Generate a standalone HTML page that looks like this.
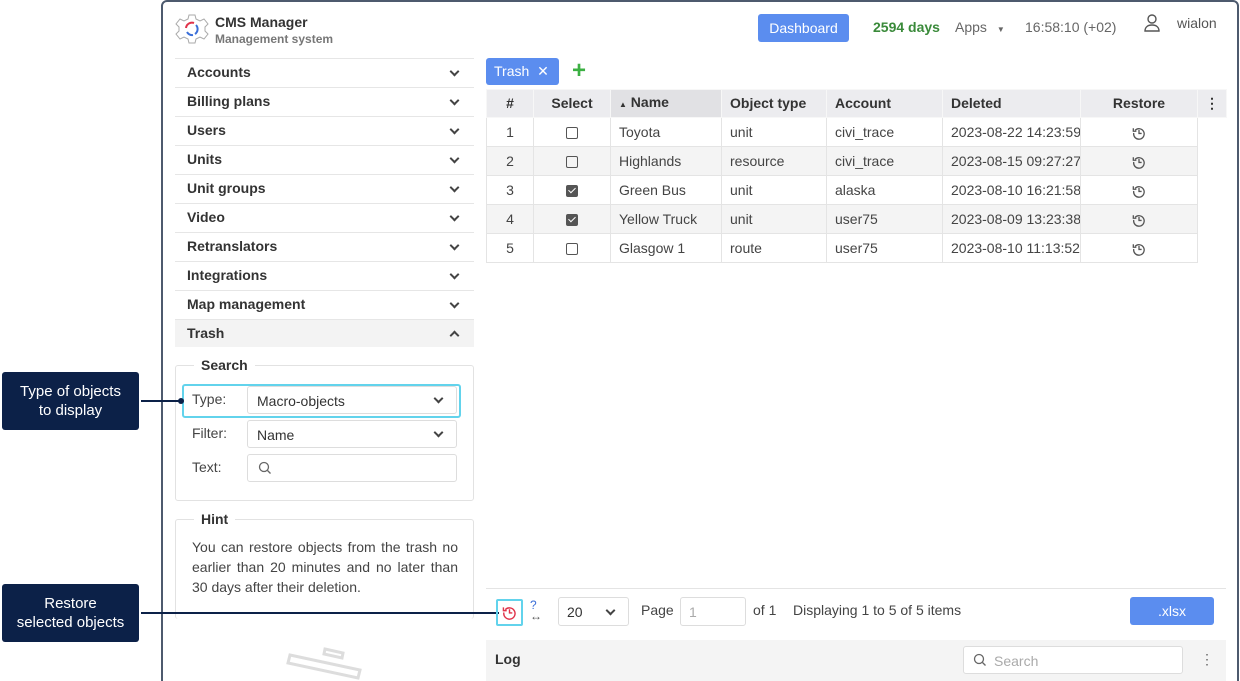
<!DOCTYPE html>
<html><head><meta charset="utf-8"><style>
*{box-sizing:border-box;margin:0;padding:0}
html,body{width:1240px;height:681px;overflow:hidden}
body{background:#fff;font-family:"Liberation Sans",sans-serif;font-size:14px;color:#333;position:relative}
.abs{position:absolute}
.frame{left:161px;top:0;width:1078px;height:700px;border:2px solid #4d5a6e;border-radius:6px;background:#fff}
.nav{left:175px;width:299px;height:29px;border-top:1px solid #e6e6e6;font-weight:bold;font-size:14px;color:#333;padding:5px 0 0 12px}
.chev{position:absolute;right:16px;top:9px;width:7px;height:7px;border-right:2px solid #444;border-bottom:2px solid #444;transform:rotate(45deg)}
.chev.up{transform:rotate(-135deg);top:12px}
table{border-collapse:collapse;font-size:14px;table-layout:fixed}
td,th{height:29px;line-height:27px;border:1px solid #e4e4e4;padding:0 0 0 8px;text-align:left;font-weight:normal;color:#444;white-space:nowrap;overflow:hidden}
th{background:#ececef;font-weight:bold;color:#333;border-color:#f7f7f7;height:27px;line-height:25px}
tr.g td{background:#f4f4f4}
.c{text-align:center;padding:0}
.cb{display:inline-block;width:12px;height:12px;border:1.5px solid #555;border-radius:2px;vertical-align:middle}
.cb.on{background:#555;position:relative}
.cb.on:after{content:"";position:absolute;left:3px;top:0px;width:3px;height:6px;border-right:1.5px solid #fff;border-bottom:1.5px solid #fff;transform:rotate(45deg)}
.callout{background:#0c2148;color:#fff;text-align:center;font-size:15px;line-height:19px;border-radius:3px;left:2px;width:137px}
.fs{left:175px;width:299px;border:1px solid #e2e2e2;border-radius:3px}
.legend{position:absolute;top:-9px;left:18px;background:#fff;padding:0 7px;font-weight:bold;font-size:14px}
.inp{position:absolute;left:247px;width:210px;height:28px;border:1px solid #ddd;border-radius:3px;padding:6px 9px;font-size:14px}
.lbl{position:absolute;left:192px;font-size:14px;color:#444}
.ri{vertical-align:middle}
</style></head><body>
<div class="abs frame"></div>
<svg class="abs" style="left:175px;top:13px" width="34" height="34" viewBox="0 0 34 34"><path d="M14 2h6l1 4 4 2 4-2 4 5-3 3v4l3 3-4 5-4-2-4 2-1 4h-6l-1-4-4-2-4 2-4-5 3-3v-4L1 11l4-5 4 2 4-2z" fill="none" stroke="#aaa" stroke-width="1"/><path d="M11 15a6 6 0 0 1 8-5" stroke="#e0334a" stroke-width="2" fill="none"/><path d="M21 12a6 6 0 0 1-1 9M12 19a6 6 0 0 0 6 3" stroke="#3b6fd8" stroke-width="2" fill="none"/></svg>
<div class="abs" style="left:215px;top:14px;font-weight:bold;font-size:14px;color:#333">CMS Manager</div>
<div class="abs" style="left:215px;top:32px;font-weight:bold;font-size:12px;color:#777">Management system</div>
<div class="abs" style="left:758px;top:14px;width:91px;height:28px;background:#5b8def;border-radius:3px;color:#fff;text-align:center;line-height:28px">Dashboard</div>
<div class="abs" style="left:873px;top:19px;color:#3a8a3a;font-weight:bold">2594 days</div>
<div class="abs" style="left:955px;top:19px;color:#666">Apps <span style="font-size:8px;margin-left:6px">▼</span></div>
<div class="abs" style="left:1025px;top:19px;color:#666">16:58:10 (+02)</div>
<svg class="abs" style="left:1143px;top:13px" width="18" height="20" viewBox="0 0 18 20"><circle cx="9" cy="6" r="4" fill="none" stroke="#555" stroke-width="1.4"/><path d="M2 18c0-4 3-6 7-6s7 2 7 6z" fill="none" stroke="#555" stroke-width="1.4"/></svg>
<div class="abs" style="left:1177px;top:15px;color:#555">wialon</div>
<div class="abs nav" style="top:58px">Accounts<i class="chev"></i></div>
<div class="abs nav" style="top:87px">Billing plans<i class="chev"></i></div>
<div class="abs nav" style="top:116px">Users<i class="chev"></i></div>
<div class="abs nav" style="top:145px">Units<i class="chev"></i></div>
<div class="abs nav" style="top:174px">Unit groups<i class="chev"></i></div>
<div class="abs nav" style="top:203px">Video<i class="chev"></i></div>
<div class="abs nav" style="top:232px">Retranslators<i class="chev"></i></div>
<div class="abs nav" style="top:261px">Integrations<i class="chev"></i></div>
<div class="abs nav" style="top:290px">Map management<i class="chev"></i></div>
<div class="abs nav" style="top:319px;background:#f3f3f3;height:28px">Trash<i class="chev up"></i></div>
<div class="abs fs" style="top:365px;height:136px"><span class="legend">Search</span></div>
<div class="abs" style="left:182px;top:384px;width:279px;height:34px;border:2px solid #62d3ec;border-radius:3px"></div>
<div class="lbl" style="top:391px">Type:</div>
<div class="inp" style="top:386px">Macro-objects<i class="chev" style="right:14px;top:8px"></i></div>
<div class="lbl" style="top:425px">Filter:</div>
<div class="inp" style="top:420px">Name<i class="chev" style="right:14px;top:8px"></i></div>
<div class="lbl" style="top:459px">Text:</div>
<div class="inp" style="top:454px"><svg width="14" height="14" viewBox="0 0 14 14" style="position:absolute;left:10px;top:6px"><circle cx="6" cy="6" r="4.5" fill="none" stroke="#666" stroke-width="1.3"/><path d="M9.5 9.5l3 3" stroke="#666" stroke-width="1.3"/></svg></div>
<div class="abs fs" style="top:519px;height:100px;border-bottom:none"><span class="legend">Hint</span></div>
<div class="abs" style="left:192px;top:537px;width:266px;font-size:14px;line-height:20px;color:#444;text-align:justify">You can restore objects from the trash no earlier than 20 minutes and no later than 30 days after their deletion.</div>
<svg class="abs" style="left:285px;top:645px" width="85" height="36" viewBox="0 0 85 36"><path d="M5 10l70 15-2 8L3 18z M40 4l18 4-1 5-18-4z" fill="none" stroke="#ddd" stroke-width="3"/></svg>
<div class="abs callout" style="top:372px;height:58px;padding-top:10px">Type of objects<br>to display</div>
<div class="abs" style="left:141px;top:400px;width:40px;height:2px;background:#0c2148"></div>
<div class="abs" style="left:178px;top:398px;width:6px;height:6px;border-radius:3px;background:#0c2148"></div>
<div class="abs callout" style="top:584px;height:58px;padding-top:10px">Restore<br>selected objects</div>
<div class="abs" style="left:141px;top:612px;width:358px;height:2px;background:#0c2148"></div>
<div class="abs" style="left:486px;top:58px;width:73px;height:27px;background:#5b8def;border-radius:3px;color:#fff;padding:5px 8px;font-size:14px">Trash <span style="margin-left:4px">✕</span></div>
<div class="abs" style="left:572px;top:58px;color:#3cb043;font-size:24px;font-weight:bold;line-height:26px">+</div>
<svg width="0" height="0" style="position:absolute"><defs><symbol id="rs" viewBox="0 0 16 16"><path d="M3.5 5A6 6 0 1 1 2 8" fill="none" stroke="currentColor" stroke-width="1.5"/><path d="M1.5 2.5v3.5h3.5" fill="none" stroke="currentColor" stroke-width="1.5"/><path d="M8 4.5V8.5h3" fill="none" stroke="currentColor" stroke-width="1.5"/></symbol></defs></svg>
<table class="abs" style="left:486px;top:89px;width:740px">
<colgroup><col style="width:47px"><col style="width:77px"><col style="width:111px"><col style="width:105px"><col style="width:116px"><col style="width:138px"><col style="width:117px"><col style="width:29px"></colgroup>
<tr><th class="c">#</th><th class="c">Select</th><th style="background:#e1e1e4"><span style="font-size:8px">▲</span> Name</th><th>Object type</th><th>Account</th><th>Deleted</th><th class="c">Restore</th><th class="c">⋮</th></tr>
<tr><td class="c">1</td><td class="c"><span class="cb"></span></td><td>Toyota</td><td>unit</td><td>civi_trace</td><td>2023-08-22 14:23:59</td><td class="c"><svg class="ri" width="14" height="14" style="color:#555"><use href="#rs"/></svg></td><td style="border:none;background:#fff"></td></tr>
<tr class="g"><td class="c">2</td><td class="c"><span class="cb"></span></td><td>Highlands</td><td>resource</td><td>civi_trace</td><td>2023-08-15 09:27:27</td><td class="c"><svg class="ri" width="14" height="14" style="color:#555"><use href="#rs"/></svg></td><td style="border:none;background:#fff"></td></tr>
<tr><td class="c">3</td><td class="c"><span class="cb on"></span></td><td>Green Bus</td><td>unit</td><td>alaska</td><td>2023-08-10 16:21:58</td><td class="c"><svg class="ri" width="14" height="14" style="color:#555"><use href="#rs"/></svg></td><td style="border:none;background:#fff"></td></tr>
<tr class="g"><td class="c">4</td><td class="c"><span class="cb on"></span></td><td>Yellow Truck</td><td>unit</td><td>user75</td><td>2023-08-09 13:23:38</td><td class="c"><svg class="ri" width="14" height="14" style="color:#555"><use href="#rs"/></svg></td><td style="border:none;background:#fff"></td></tr>
<tr><td class="c">5</td><td class="c"><span class="cb"></span></td><td>Glasgow 1</td><td>route</td><td>user75</td><td>2023-08-10 11:13:52</td><td class="c"><svg class="ri" width="14" height="14" style="color:#555"><use href="#rs"/></svg></td><td style="border:none;background:#fff"></td></tr>
</table>
<div class="abs" style="left:486px;top:588px;width:740px;height:1px;background:#e4e4e4"></div>
<div class="abs" style="left:496px;top:599px;width:27px;height:27px;border:2px solid #62d3ec;border-radius:2px;color:#e0334a;padding:4px 0 0 4px"><svg width="15" height="15" style="display:block"><use href="#rs"/></svg></div>
<div class="abs" style="left:530px;top:600px;color:#3b6fd8;font-size:12px;line-height:11px">?<br><span style="color:#555">↔</span></div>
<div class="abs" style="left:558px;top:597px;width:71px;height:29px;border:1px solid #ddd;border-radius:3px;padding:6px 8px">20<i class="chev" style="right:14px;top:9px"></i></div>
<div class="abs" style="left:641px;top:602px;color:#444">Page</div>
<div class="abs" style="left:680px;top:597px;width:66px;height:29px;border:1px solid #ddd;border-radius:3px;padding:6px 8px;color:#aaa">1</div>
<div class="abs" style="left:753px;top:602px;color:#444">of 1</div>
<div class="abs" style="left:793px;top:602px;color:#444">Displaying 1 to 5 of 5 items</div>
<div class="abs" style="left:1130px;top:597px;width:84px;height:28px;background:#5b8def;border-radius:3px;color:#fff;text-align:center;line-height:28px">.xlsx</div>
<div class="abs" style="left:486px;top:640px;width:740px;height:41px;background:#f4f4f4"></div>
<div class="abs" style="left:495px;top:651px;font-weight:bold;color:#333">Log</div>
<div class="abs" style="left:963px;top:646px;width:220px;height:28px;background:#fff;border:1px solid #ddd;border-radius:3px;padding:6px 0 0 30px;color:#aaa">Search<svg width="14" height="14" viewBox="0 0 14 14" style="position:absolute;left:9px;top:6px"><circle cx="6" cy="6" r="4.5" fill="none" stroke="#666" stroke-width="1.3"/><path d="M9.5 9.5l3 3" stroke="#666" stroke-width="1.3"/></svg></div>
<div class="abs" style="left:1200px;top:651px;color:#666">⋮</div>
</body></html>
